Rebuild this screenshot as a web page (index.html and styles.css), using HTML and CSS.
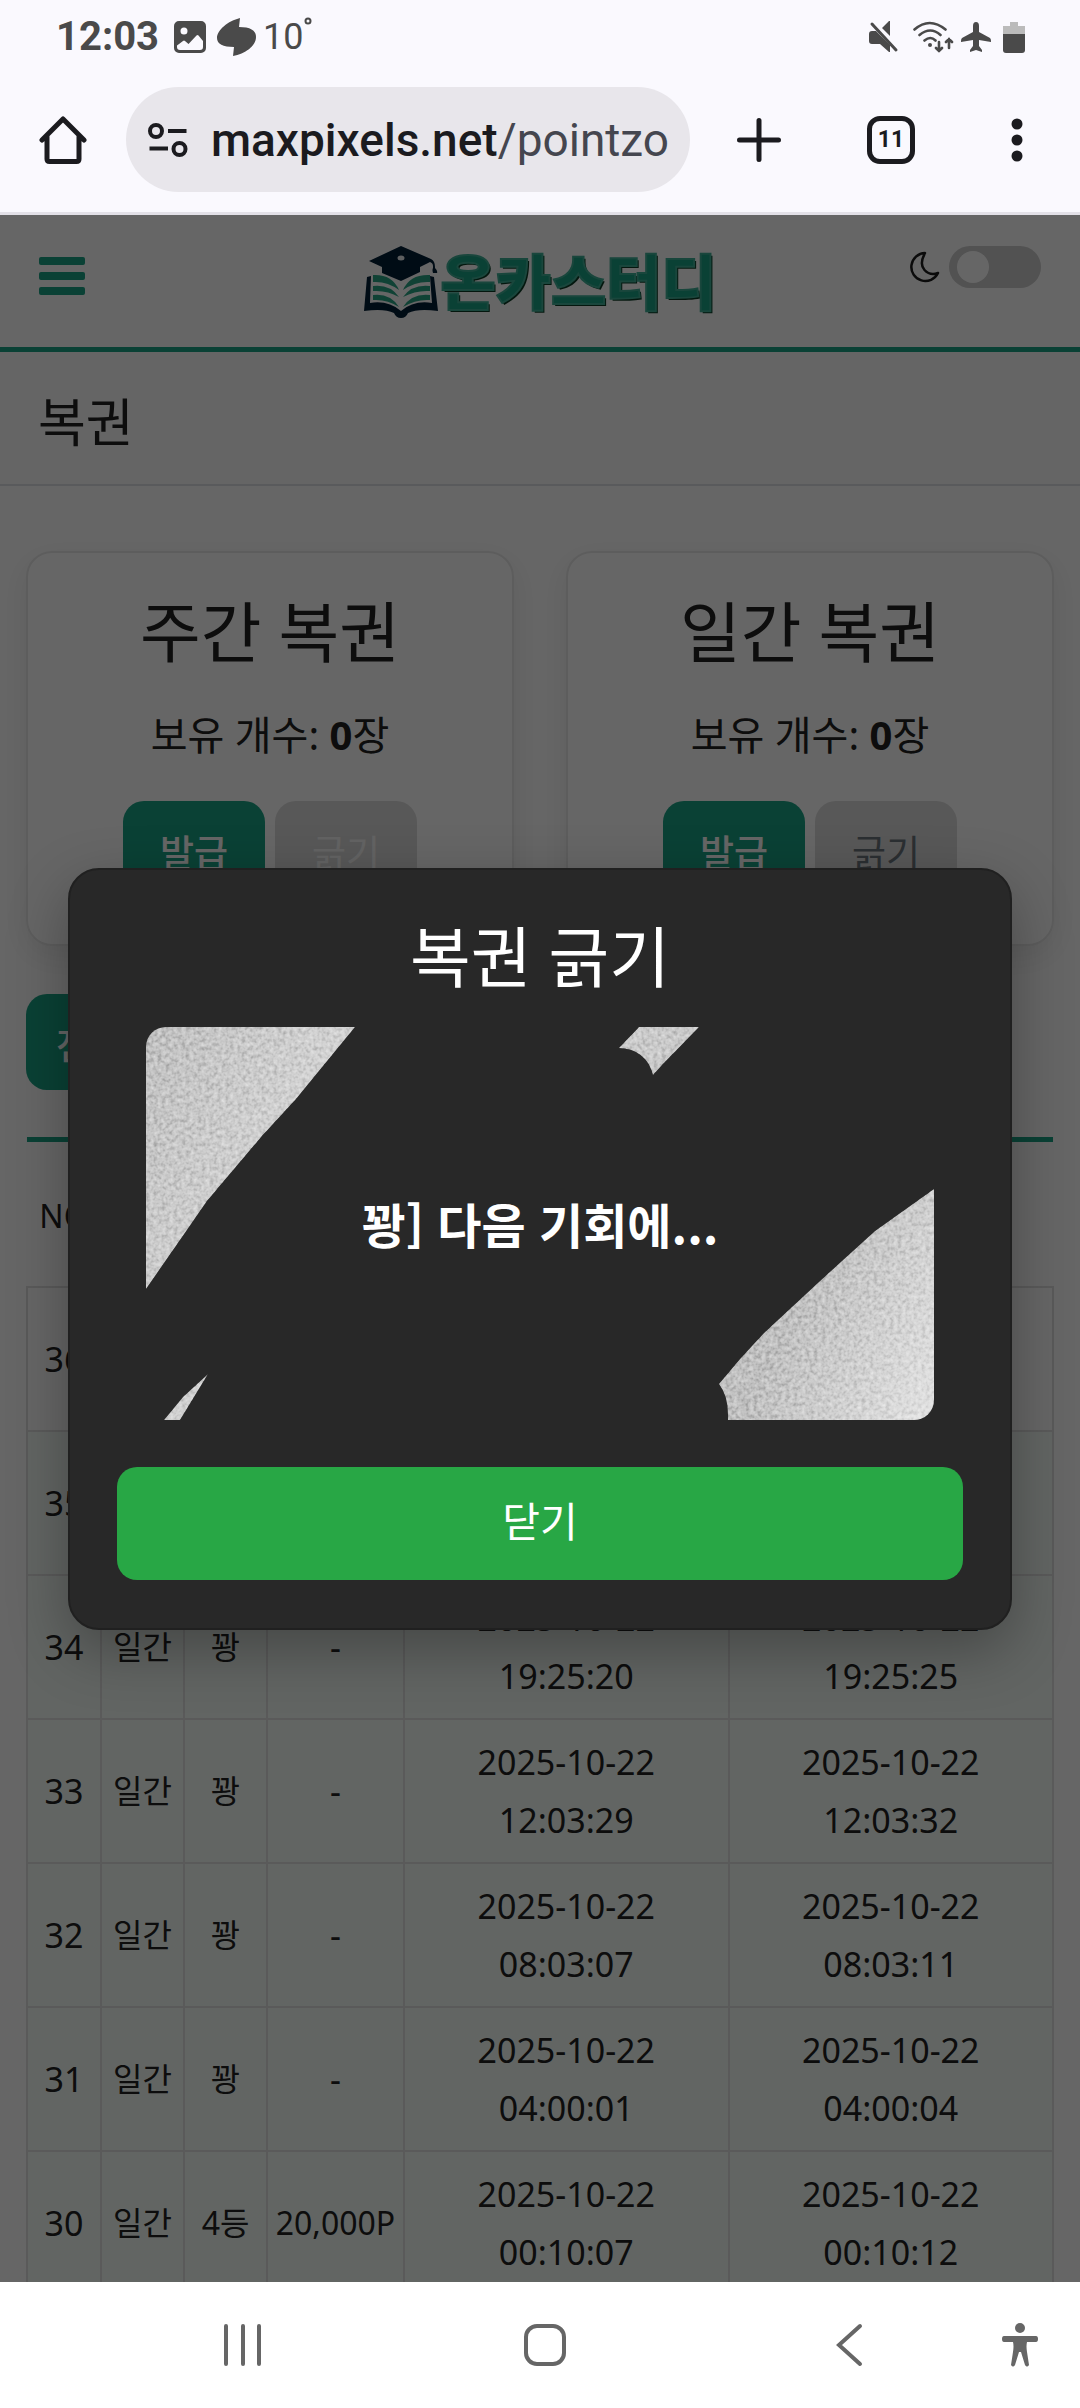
FILE: index.html
```html
<!DOCTYPE html>
<html lang="ko">
<head>
<meta charset="utf-8">
<meta name="viewport" content="width=device-width">
<title>복권</title>
<link rel="stylesheet" href="styles.css">
</head>
<body>
<div class="status">
  <span class="clock">12:03</span>
  <svg class="st-photo" width="32" height="32" viewBox="0 0 32 32"><path fill="#4a4a4a" fill-rule="evenodd" d="M5 0h22a5 5 0 0 1 5 5v22a5 5 0 0 1-5 5H5a5 5 0 0 1-5-5V5a5 5 0 0 1 5-5zM10 6.500a3.500 3.500 0 1 0 0 7a3.500 3.500 0 1 0 0-7zM3 26q0 3 3 3h20q3 0 3-3v-6l-4.500-5.500q-1-1-2 0L14.500 23l-3.500-3q-1-1-2 0L3 24.500z"/></svg>
  <svg class="st-swirl" width="40" height="38" viewBox="0 0 40 38"><path fill="#4a4a4a" d="M23 0C11 3 0 12 0 20c0 6 6 9 17 9l-1 9c12-2 23-10 23-19 0-7-6-10-17-10z"/></svg>
  <span class="temp">10<svg class="degree" width="8" height="8" viewBox="0 0 8 8"><circle cx="4" cy="4" r="2.500" fill="none" stroke="#4a4a4a" stroke-width="2"/></svg></span>
  <span class="grow"></span>
  <svg class="st-mute" width="30" height="32" viewBox="0 0 30 32"><g fill="#4a4a4a"><path d="M3 10h4l14 14v7h-1l-9-8H3q-3 0-3-3v-7q0-3 3-3zM13 7l7-7h1v15z"/></g><path d="M3 3l24 26" stroke="#4a4a4a" stroke-width="3" stroke-linecap="round"/></svg>
  <svg class="st-wifi" width="41" height="32" viewBox="0 0 41 32"><g fill="none" stroke="#4a4a4a" stroke-linecap="round" stroke-width="2.600"><path d="M1.500 8.500q15-13 31 0M6.500 14q11-9 21 0M11.500 19.500q6-5 11 0M26 21v9m-3-3l3 3 3-3M36 27v-9m-3 3l3-3 3 3"/></g><circle cx="17" cy="24" r="2" fill="#4a4a4a"/></svg>
  <svg class="st-plane" width="30" height="30" viewBox="0 0 30 30"><path fill="#4a4a4a" d="M15 0q3 0 3 4v6l11 6q1 1 1 3v1l-12-2v6l3 4v2l-6-2-6 2v-2l3-4v-6L0 20v-1q0-2 1-3l11-6V4q0-4 3-4z"/></svg>
  <svg width="22" height="31" viewBox="0 0 22 31"><path fill="#bbb" d="M7 0h8v4h7v8H0V4h7z"/><path fill="#4a4a4a" d="M0 12h22v16q0 3-3 3H3q-3 0-3-3z"/></svg>
</div>
<nav class="toolbar">
  <button class="tool home" aria-label="홈"><svg width="48" height="48" viewBox="0 0 48 48"><path d="M3 24L24 3l21 21M8 20v23q0 2.500 2.500 2.500h27q2.500 0 2.500-2.500V20" fill="none" stroke="#1b1b1f" stroke-width="5" stroke-linecap="round" stroke-linejoin="round"/></svg></button>
  <a class="omnibox" href="#"><svg class="tune" width="40" height="34" viewBox="0 0 40 34" fill="none" stroke="#1b1b1f" stroke-width="4"><circle cx="8" cy="8" r="6"/><circle cx="31.500" cy="26" r="6"/><path d="M20 8h18.500M1.500 25.500H20"/></svg><span class="url">maxpixels.net<span class="path">/pointzo</span></span></a>
  <button class="tool plus" aria-label="새 탭"><svg width="44" height="44" viewBox="0 0 44 44"><path d="M22 2.500v39M2.500 22h39" stroke="#1b1b1f" stroke-width="5" stroke-linecap="round"/></svg></button>
  <button class="tool tabs">11</button>
  <button class="tool more" aria-label="메뉴"><svg width="12" height="44" viewBox="0 0 12 44" fill="#1b1b1f"><circle cx="6" cy="6" r="5.500"/><circle cx="6" cy="22" r="5.500"/><circle cx="6" cy="38" r="5.500"/></svg></button>
</nav>
<main class="view">
  <header class="site-head">
    <button class="burger" aria-label="메뉴 열기"><i></i><i></i><i></i></button>
    <a class="logo" href="#">
      <svg width="76" height="72" viewBox="0 0 76 72"><g fill="#001e36"><path d="M37 0l30 13q4 2 4 8v1q3 3 2 5h-4q-1-3 0-5v-2q0-3-3-4l-10 5v5l-19 9-19-8v-6L5 15z"/><path d="M3 31l4-1-1 27q18-3 31 8 13-11 31-8l-2-27 4 1 4 34q-20-3-30 2-2 5-7 5t-7-5q-10-5-30-2z"/></g><ellipse cx="37" cy="12" rx="3.500" ry="2.500" fill="#e8eef0"/><g fill="#2aa585"><path d="M9 29q19-1 26 15-12-9-26-8zM9 40q17-2 26 11-12-7-26-6zM9 49q17-2 26 12-12-8-26-7z"/><path d="M66 29q-20-1-27 15 13-9 27-8zM66 40q-18-2-27 11 13-7 27-6zM66 49q-18-2-27 12 13-8 27-7z"/></g></svg><span class="brand">온카스터디</span>
    </a>
    <label class="theme"><svg width="30" height="32" viewBox="0 0 30 32"><path d="M15 2A14 14 0 1 0 28 22Q20 25 14.500 19T15 2z" fill="none" stroke="#1c1c1c" stroke-width="2.500" stroke-linejoin="round"/></svg><input type="checkbox" class="switch" aria-label="다크 모드"></label>
  </header>
  <h1 class="page-title">복권</h1>
  <section class="content">
    <div class="cards">
      <article class="card"><h2>주간 복권</h2><p>보유 개수: <b>0</b>장</p><div class="acts"><button class="btn go">발급</button><button class="btn off pale">긁기</button></div></article>
      <article class="card"><h2>일간 복권</h2><p>보유 개수: <b>0</b>장</p><div class="acts"><button class="btn go">발급</button><button class="btn off">긁기</button></div></article>
    </div>
    <button class="btn go filter">전체</button>
    <table class="log">
      <colgroup><col class="c-no"><col class="c-kind"><col class="c-kind"><col class="c-prize"><col><col></colgroup>
      <thead><tr><th>NO</th><th></th><th></th><th></th><th></th><th></th></tr></thead>
      <tbody>
        <tr class="white"><td>36</td><td></td><td></td><td></td><td></td><td></td></tr>
        <tr><td>35</td><td></td><td></td><td></td><td></td><td></td></tr>
        <tr><td>34</td><td class="sm">일간</td><td class="sm">꽝</td><td>-</td><td class="date">2025-10-22 19:25:20</td><td class="date">2025-10-22 19:25:25</td></tr>
        <tr><td>33</td><td class="sm">일간</td><td class="sm">꽝</td><td>-</td><td class="date">2025-10-22 12:03:29</td><td class="date">2025-10-22 12:03:32</td></tr>
        <tr><td>32</td><td class="sm">일간</td><td class="sm">꽝</td><td>-</td><td class="date">2025-10-22 08:03:07</td><td class="date">2025-10-22 08:03:11</td></tr>
        <tr><td>31</td><td class="sm">일간</td><td class="sm">꽝</td><td>-</td><td class="date">2025-10-22 04:00:01</td><td class="date">2025-10-22 04:00:04</td></tr>
        <tr><td>30</td><td class="sm">일간</td><td class="sm">4등</td><td class="sm">20,000P</td><td class="date">2025-10-22 00:10:07</td><td class="date">2025-10-22 00:10:12</td></tr>
      </tbody>
    </table>
  </section>
  <div class="backdrop">
    <section class="modal" role="dialog" aria-labelledby="modal-title">
      <h2 id="modal-title">복권 긁기</h2>
      <div class="ticket">
        <svg class="foil" viewBox="0 0 788 393" preserveAspectRatio="none">
          <defs>
            <linearGradient id="sheen" gradientUnits="userSpaceOnUse" x1="0" y1="0" x2="788" y2="393"><stop offset="0" stop-color="#c0c0c0"/><stop offset=".2" stop-color="#d2d2d2"/><stop offset=".5" stop-color="#cbcbcb"/><stop offset=".8" stop-color="#c0c0c0"/><stop offset="1" stop-color="#e2e2e2"/></linearGradient>
            <filter id="grain" x="0" y="0" width="100%" height="100%" color-interpolation-filters="sRGB"><feTurbulence type="fractalNoise" baseFrequency=".25" numOctaves="2" seed="4"/><feColorMatrix values="1.100 0 0 0 -.05 1.100 0 0 0 -.05 1.100 0 0 0 -.05 0 0 0 0 1"/><feBlend in2="SourceGraphic" mode="soft-light"/><feComposite in2="SourceGraphic" operator="in"/></filter>
          </defs>
          <g fill="url(#sheen)" filter="url(#grain)"><path d="M0 0H209L150 72 116 109 61 174 34 213 0 262z"/><path d="M493 0L473 21Q500 22 507 48L517 37 553 0z"/><path d="M788 162L729 204 674 254 618 306 594 332 573 357Q583 370 582 393H788z"/><path d="M18 393H34L62 347 37 370z"/></g>
        </svg>
        <p class="result">꽝] 다음 기회에...</p>
      </div>
      <button class="close">닫기</button>
    </section>
  </div>
</main>
<nav class="sysnav">
  <div class="keys">
    <button aria-label="최근 앱"><svg width="42" height="44" viewBox="0 0 42 44"><path d="M4 3v38M21 3v38M37 3v38" stroke="#666" stroke-width="4" stroke-linecap="round"/></svg></button>
    <button class="key-home" aria-label="홈 화면"><svg width="44" height="44" viewBox="0 0 44 44"><rect x="3" y="3" width="38" height="38" rx="11" fill="none" stroke="#666" stroke-width="4"/></svg></button>
    <button aria-label="뒤로"><svg width="28" height="44" viewBox="0 0 28 44"><path d="M25 3L4 22l21 19" fill="none" stroke="#666" stroke-width="4" stroke-linecap="round"/></svg></button>
  </div>
  <button aria-label="접근성"><svg width="38" height="46" viewBox="0 0 38 46" fill="#666"><circle cx="19" cy="6" r="5"/><path d="M3 14h32q2 0 2 3t-2 3H26q-1 4 0 10l2 13q-2 3-4 0L20 30h-2l-4 13q-2 3-4 0l2-13q1-6 0-10H3q-2 0-2-3t2-3z"/></svg></button>
</nav>
</body>
</html>
```
FILE: styles.css
```css
* { box-sizing: border-box; }

body {
  margin: 0;
  height: 100vh;
  display: flex;
  flex-direction: column;
  overflow: hidden;
  background: #faf9fe;
  color: #222;
  font-family: "Noto Sans", "Noto Sans CJK KR", sans-serif;
}

button { font: inherit; border: 0; padding: 0; background: none; }
a { color: inherit; text-decoration: none; }
svg { display: block; flex: none; }
h1, h2, p { margin: 0; font-weight: 400; }

/* phone status bar */
.status {
  flex: none;
  height: 74px;
  padding: 0 55px 0 56px;
  display: flex;
  align-items: center;
  color: #4a4a4a;
  font-family: Roboto, sans-serif;
}
.clock { font-size: 40px; font-weight: 700; line-height: 48px; }
.st-photo { margin-left: 15px; }
.st-swirl { margin-left: 11px; }
.temp { margin-left: 6px; display: flex; font-size: 36px; line-height: 48px; }
.degree { margin-top: 4px; }
.grow { flex: 1; }
.st-mute { margin-right: 14px; }
.st-wifi { margin-right: 7px; }
.st-plane { margin-right: 12px; }

/* browser toolbar */
.toolbar {
  flex: none;
  display: flex;
  align-items: center;
  padding: 13px 57px 20px 39px;
  border-bottom: 3px solid #e3e1e8;
}
.tool { flex: none; color: #1b1b1f; }
.omnibox {
  flex: 1;
  min-width: 0;
  height: 105px;
  margin: 0 47px 0 39px;
  padding: 0 16px 0 22px;
  border-radius: 53px;
  display: flex;
  align-items: center;
  gap: 23px;
  background: #e8e6eb;
}
.url {
  flex: 1;
  overflow: hidden;
  white-space: nowrap;
  font: 500 46px/60px Roboto, sans-serif;
  color: #1b1b1f;
}
.path { font-weight: 400; color: #45464f; }
.tabs {
  width: 48px;
  height: 48px;
  margin: 0 96px 0 86px;
  border: 5px solid #1b1b1f;
  border-radius: 13px;
  font: 700 23px/38px Roboto, sans-serif;
}

/* web page */
.view {
  flex: 1;
  min-height: 0;
  position: relative;
  overflow: hidden;
  background: #fff;
}
.site-head {
  height: 137px;
  padding: 31px 39px 0;
  display: grid;
  grid-template-columns: 1fr auto 1fr;
  align-items: start;
  border-bottom: 5px solid #1aa284;
}
.burger { margin-top: 11px; width: 46px; display: grid; gap: 7px; }
.burger i { height: 8px; border-radius: 2px; background: #1aa284; }
.logo { display: flex; align-items: flex-start; gap: 1px; }
.brand {
  font: 900 60px/66px "Noto Sans CJK KR", sans-serif;
  color: #1aa284;
  -webkit-text-stroke: 2px #3fae96;
  text-shadow: 2px 2px 0 #0a3a24;
}
.theme { justify-self: end; display: flex; align-items: center; gap: 9px; }
.switch {
  appearance: none;
  margin: 0;
  width: 92px;
  height: 42px;
  padding: 5px 8px;
  border-radius: 21px;
  background: #ccc;
}
.switch::before {
  content: "";
  display: block;
  width: 32px;
  height: 32px;
  border-radius: 50%;
  background: #fff;
}
.page-title {
  padding: 34px 38px 26px;
  background: #fcfcfc;
  border-bottom: 2px solid #dee2e6;
  font-size: 52px;
  line-height: 72px;
}

.content { padding: 65px 26px 0; }
.cards { display: grid; grid-template-columns: 1fr 1fr; gap: 52px; margin-bottom: 48px; }
.card {
  padding: 28px 20px 47px;
  border: 2px solid #e8e8e8;
  border-radius: 26px;
  text-align: center;
  box-shadow: 0 10px 30px rgba(0, 0, 0, .08);
}
h2 { font-size: 66px; line-height: 100px; }
.card p { margin: 20px 0 32px; font-size: 40px; line-height: 68px; }
.acts { display: flex; justify-content: center; gap: 10px; }
.btn {
  width: 142px;
  height: 96px;
  padding-top: 8px;
  border-radius: 21px;
  font-size: 37px;
  line-height: 54px;
}
.go { background: #1aa284; color: #fff; font-weight: 500; }
.off { background: #dcdcdc; color: #6c757d; }
.pale { color: #f8f8f8; }
.filter { width: auto; padding: 8px 30px 0; }

.log {
  width: 100%;
  margin-top: 47px;
  border-top: 5px solid #1aa284;
  border-collapse: collapse;
  table-layout: fixed;
  font-size: 34px;
  line-height: 58px;
  text-align: center;
}
.c-no { width: 74px; }
.c-kind { width: 83px; }
.c-prize { width: 137px; }
.log th { height: 147px; padding: 4px 0 0; font-size: 32px; font-weight: 400; }
.log td { height: 144px; padding: 13px 0; border: 2px solid #e0e0e0; background: #f5fcf8; }
.log .white td { background: #fff; }
.log .sm { font-size: 32px; }
.log .date { padding: 13px 60px; }

/* scratch dialog */
.backdrop {
  position: absolute;
  inset: 0;
  display: flex;
  align-items: center;
  justify-content: center;
  background: rgba(0, 0, 0, .6);
}
.modal {
  width: calc(100% - 136px);
  padding: 36px 47px 48px;
  border: 2px solid #202020;
  border-radius: 31px;
  background: #282828;
  color: #fff;
  text-align: center;
  box-shadow: 0 20px 60px rgba(0, 0, 0, .3);
}
.ticket {
  height: 393px;
  margin: 21px 29px 47px;
  display: grid;
  place-items: center;
  border-radius: 20px;
  overflow: hidden;
}
.foil, .result { grid-area: 1 / 1; }
.foil { width: 100%; height: 100%; }
.result { position: relative; font: 700 48px/70px "Noto Sans CJK KR", sans-serif; }
.close {
  width: 100%;
  height: 113px;
  padding-bottom: 8px;
  border-radius: 20px;
  background: #28a745;
  color: #fff;
  font-size: 41px;
}

/* system navigation */
.sysnav {
  flex: none;
  height: 126px;
  padding: 0 41px 0 222px;
  display: flex;
  align-items: center;
  gap: 138px;
  background: #fff;
}
.keys { flex: 1; display: flex; justify-content: space-between; }
.key-home { margin-right: 9px; }
```
